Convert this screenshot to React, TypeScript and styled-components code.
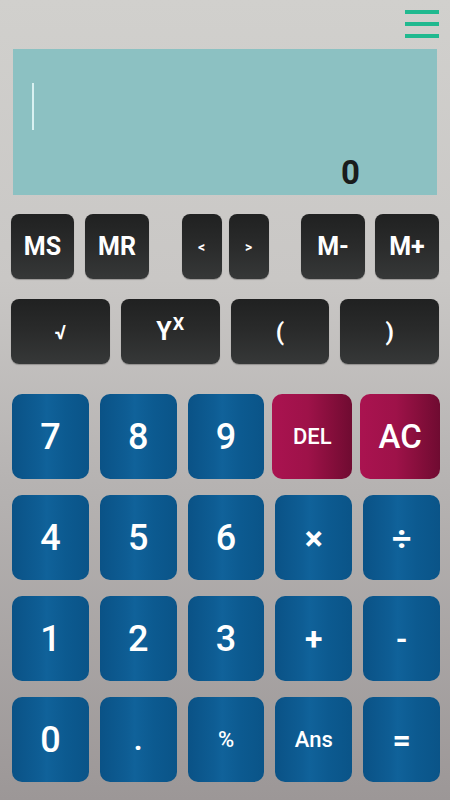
import React from "react";
import styled, { createGlobalStyle, css } from "styled-components";

const Global = createGlobalStyle`
  html, body { margin: 0; padding: 0; }
  body { width: 450px; height: 800px; overflow: hidden; font-family: Roboto, "Noto Sans", sans-serif; }
`;

const Screen = styled.div`
  width: 450px;
  height: 800px;
  box-sizing: border-box;
  display: flex;
  flex-direction: column;
  background: linear-gradient(180deg, #d1d0cd 0%, #c9c7c5 35%, #b6b3b2 60%, #9c9797 100%);
`;

const Header = styled.div`
  height: 49px;
  display: flex;
  justify-content: flex-end;
  align-items: flex-start;
  padding: 10px 11px 0 0;
  box-sizing: border-box;
`;

const MenuButton = styled.div`
  width: 34px;
  display: flex;
  flex-direction: column;
  gap: 8px;
`;

const MenuLine = styled.span`
  display: block;
  height: 4px;
  background: #20b98f;
`;

const Display = styled.div`
  margin: 0 13px;
  height: 146px;
  background: #8cc1c2;
  display: flex;
  flex-direction: column;
  justify-content: space-between;
  padding: 34px 77px 4px 19px;
  box-sizing: border-box;
`;

const Cursor = styled.div`
  width: 2px;
  height: 47px;
  background: #d9f1f1;
`;

const Result = styled.div`
  align-self: flex-end;
  font-family: Roboto, sans-serif;
  font-weight: 700;
  font-size: 33px;
  line-height: 36px;
  color: #1a1c1c;
`;

const MemRow = styled.div`
  margin-top: 19px;
  padding: 0 11px;
  display: flex;
  justify-content: space-between;
  height: 65px;
`;

const Group = styled.div<{ $gap: number }>`
  display: flex;
  gap: ${(p) => p.$gap}px;
`;

const FuncRow = styled.div`
  margin-top: 20px;
  padding: 0 11px;
  display: grid;
  grid-template-columns: repeat(4, 1fr);
  gap: 11px;
  height: 65px;
`;

const DarkKey = styled.div<{ $w?: number; $size?: number }>`
  ${(p) => p.$w && css`width: ${p.$w}px;`}
  height: 65px;
  border-radius: 8px;
  background: linear-gradient(180deg, #202121 0%, #2a2b2b 50%, #363838 100%);
  box-shadow: 0 1px 1px rgba(0, 0, 0, 0.25);
  color: #fff;
  display: flex;
  align-items: center;
  justify-content: center;
  font-family: Roboto, sans-serif;
  font-weight: 700;
  font-size: ${(p) => p.$size ?? 25}px;
`;

const Sup = styled.span`
  font-size: 18px;
  align-self: flex-start;
  margin-top: 14px;
  margin-left: 1px;
`;

const Pad = styled.div`
  margin-top: 30px;
  padding: 0 10px 0 12px;
  display: grid;
  grid-template-columns: repeat(5, 1fr);
  grid-auto-rows: 85px;
  column-gap: 11px;
  row-gap: 16px;
`;

const Key = styled.div<{ $red?: boolean; $size?: number; $weight?: number }>`
  border-radius: 10px;
  display: flex;
  align-items: center;
  justify-content: center;
  color: #fff;
  font-family: Roboto, sans-serif;
  font-size: ${(p) => p.$size ?? 36}px;
  font-weight: ${(p) => p.$weight ?? 500};
  background: linear-gradient(90deg, #0a5286 0%, #0e5d94 35%, #10629a 45%, #0c5a90 70%, #0a5488 100%);
  ${(p) =>
    p.$red &&
    css`
      margin-left: -3px;
      background: linear-gradient(90deg, #aa1350 0%, #9e1249 45%, #850e3b 75%, #6f0b31 100%);
    `}
`;

type K = { label: React.ReactNode; red?: boolean; size?: number; weight?: number };

const keys: K[] = [
  { label: "7" },
  { label: "8" },
  { label: "9" },
  { label: "DEL", red: true, size: 22 },
  { label: "AC", red: true, size: 33 },
  { label: "4" },
  { label: "5" },
  { label: "6" },
  { label: "×", size: 34, weight: 700 },
  { label: "÷", size: 34, weight: 700 },
  { label: "1" },
  { label: "2" },
  { label: "3" },
  { label: "+", size: 32, weight: 700 },
  { label: "-", size: 30, weight: 700 },
  { label: "0" },
  { label: ".", size: 30, weight: 700 },
  { label: "%", size: 22 },
  { label: "Ans", size: 22 },
  { label: "=", size: 32, weight: 700 },
];

export default function App() {
  return (
    <>
      <Global />
      <Screen>
        <Header>
          <MenuButton>
            <MenuLine />
            <MenuLine />
            <MenuLine />
          </MenuButton>
        </Header>
        <Display>
          <Cursor />
          <Result>0</Result>
        </Display>
        <MemRow>
          <Group $gap={11}>
            <DarkKey $w={63}>MS</DarkKey>
            <DarkKey $w={64}>MR</DarkKey>
          </Group>
          <Group $gap={7}>
            <DarkKey $w={40} $size={14}>&lt;</DarkKey>
            <DarkKey $w={40} $size={14}>&gt;</DarkKey>
          </Group>
          <Group $gap={10}>
            <DarkKey $w={64}>M-</DarkKey>
            <DarkKey $w={64}>M+</DarkKey>
          </Group>
        </MemRow>
        <FuncRow>
          <DarkKey $size={20}>√</DarkKey>
          <DarkKey $size={25}>
            Y<Sup>X</Sup>
          </DarkKey>
          <DarkKey $size={24}>(</DarkKey>
          <DarkKey $size={24}>)</DarkKey>
        </FuncRow>
        <Pad>
          {keys.map((k, i) => (
            <Key key={i} $red={k.red} $size={k.size} $weight={k.weight}>
              {k.label}
            </Key>
          ))}
        </Pad>
      </Screen>
    </>
  );
}
